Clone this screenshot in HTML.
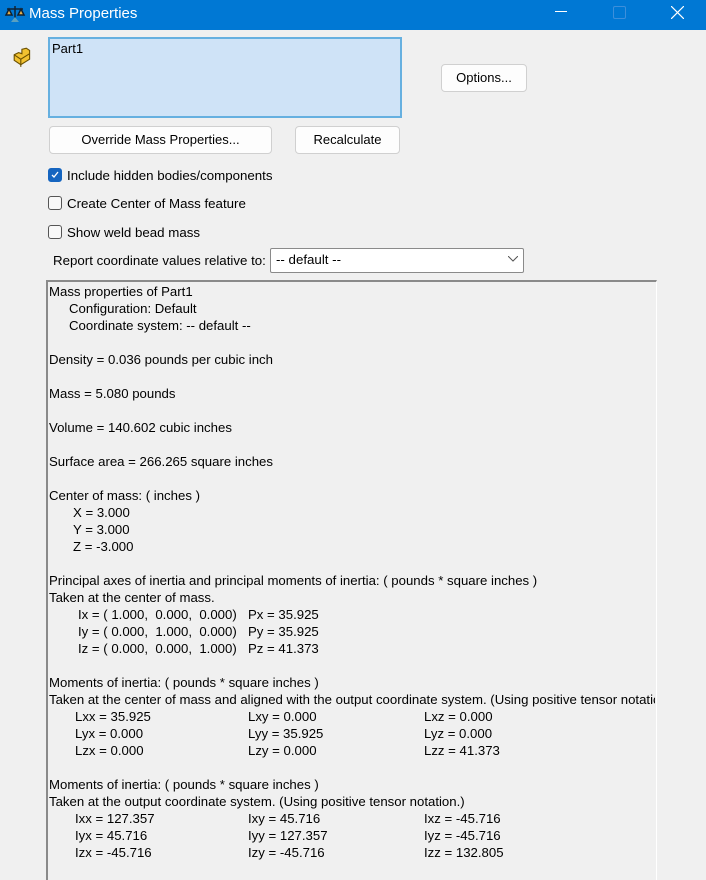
<!DOCTYPE html>
<html><head><style>
body{margin:0;width:706px;height:870px;background:#f0f0f0;font-family:"Liberation Sans",sans-serif;font-size:13px;color:#000;position:relative;overflow:hidden}
.a{position:absolute;white-space:nowrap}
.btn{position:absolute;background:#fdfdfd;border:1px solid #d0d0d0;border-radius:4px;text-align:center;box-sizing:border-box;font-size:13px}
.cb{position:absolute;width:14px;height:14px;border:1px solid #555;border-radius:3px;background:#f8f8f8;box-sizing:border-box}
#ta{position:absolute;left:46px;top:280px;width:611px;height:600px;border-left:2px solid #8a8a8a;border-top:2px solid #8a8a8a;border-right:1px solid #fff;box-sizing:border-box;overflow:hidden}
.t{font-size:13.2px}
</style></head><body>
<div class="a" style="left:0;top:0;width:706px;height:30px;background:#0078d4"></div>
<svg class="a" style="left:4px;top:4px" width="22" height="20" viewBox="0 0 22 20"><path d="M11 2v14M3 5h16M5 5l-3 6h6zM17 5l-3 6h6z" stroke="#123" stroke-width="1.5" fill="#e8b04a"/><path d="M7 18h8l-4-5z" fill="#5aa0c0"/></svg>
<div class="a" style="left:29px;top:5px;color:#fff;font-size:15px">Mass Properties</div>
<div class="a" style="left:555px;top:11px;width:12px;height:1px;background:#fff"></div>
<div class="a" style="left:613px;top:6px;width:11px;height:11px;border:1px solid #3d8fdb;border-radius:2px"></div>
<svg class="a" style="left:671px;top:6px" width="13" height="13"><path d="M0 0L13 13M13 0L0 13" stroke="#fff" stroke-width="1.2"/></svg>
<svg class="a" style="left:12px;top:46px" width="22" height="22" viewBox="0 0 20 20"><path d="M2 8l4-2 3 1v-4l4-1 3 2v8l-8 5-6-4z" fill="#f2c230" stroke="#6b5000"/><path d="M2 8l6 4 8-5M8 12v7" stroke="#6b5000" fill="none"/></svg>
<div class="a" style="left:48px;top:37px;width:354px;height:81px;background:#cfe3f7;border:2px solid #66b0e0;box-sizing:border-box"></div>
<div class="a" style="left:52px;top:41px">Part1</div>
<div class="btn" style="left:441px;top:64px;width:86px;height:28px;line-height:26px">Options...</div>
<div class="btn" style="left:49px;top:126px;width:223px;height:28px;line-height:26px">Override Mass Properties...</div>
<div class="btn" style="left:295px;top:126px;width:105px;height:28px;line-height:26px">Recalculate</div>
<div class="cb" style="left:48px;top:168px;background:#1565c0;border-color:#1565c0"><svg width="12" height="12" style="position:absolute;left:0;top:0"><path d="M3 6l2 2 4-5" stroke="#fff" stroke-width="1.3" fill="none"/></svg></div>
<div class="a" style="left:67px;top:168px;font-size:13.3px">Include hidden bodies/components</div>
<div class="cb" style="left:48px;top:196px"></div>
<div class="a" style="left:67px;top:196px;font-size:13.3px">Create Center of Mass feature</div>
<div class="cb" style="left:48px;top:225px"></div>
<div class="a" style="left:67px;top:225px;font-size:13.3px">Show weld bead mass</div>
<div class="a" style="left:53px;top:253px;font-size:13.3px">Report coordinate values relative to:</div>
<div class="a" style="left:270px;top:248px;width:254px;height:25px;background:#fff;border:1px solid #8a8a8a;box-sizing:border-box;border-radius:2px"></div>
<div class="a" style="left:276px;top:252px;font-size:13.3px">-- default --</div>
<svg class="a" style="left:508px;top:256px" width="10" height="6"><path d="M0 0L5 5L10 0" stroke="#555" fill="none"/></svg>
<div id="ta"></div>
<div class="t">
<div class="a" style="left:49px;top:284px">Mass properties of Part1</div>
<div class="a" style="left:69px;top:301px">Configuration: Default</div>
<div class="a" style="left:69px;top:318px">Coordinate system: -- default --</div>
<div class="a" style="left:49px;top:352px">Density = 0.036 pounds per cubic inch</div>
<div class="a" style="left:49px;top:386px">Mass = 5.080 pounds</div>
<div class="a" style="left:49px;top:420px">Volume = 140.602 cubic inches</div>
<div class="a" style="left:49px;top:454px">Surface area = 266.265 square inches</div>
<div class="a" style="left:49px;top:488px">Center of mass: ( inches )</div>
<div class="a" style="left:73px;top:505px">X = 3.000</div>
<div class="a" style="left:73px;top:522px">Y = 3.000</div>
<div class="a" style="left:73px;top:539px">Z = -3.000</div>
<div class="a" style="left:49px;top:573px">Principal axes of inertia and principal moments of inertia: ( pounds * square inches )</div>
<div class="a" style="left:49px;top:590px">Taken at the center of mass.</div>
<div class="a" style="left:78px;top:607px">Ix = ( 1.000,&nbsp; 0.000,&nbsp; 0.000)</div><div class="a" style="left:248px;top:607px">Px = 35.925</div>
<div class="a" style="left:78px;top:624px">Iy = ( 0.000,&nbsp; 1.000,&nbsp; 0.000)</div><div class="a" style="left:248px;top:624px">Py = 35.925</div>
<div class="a" style="left:78px;top:641px">Iz = ( 0.000,&nbsp; 0.000,&nbsp; 1.000)</div><div class="a" style="left:248px;top:641px">Pz = 41.373</div>
<div class="a" style="left:49px;top:675px">Moments of inertia: ( pounds * square inches )</div>
<div class="a" style="left:49px;top:692px;width:606px;overflow:hidden">Taken at the center of mass and aligned with the output coordinate system. (Using positive tensor notation.)</div>
<div class="a" style="left:75px;top:709px">Lxx = 35.925</div><div class="a" style="left:248px;top:709px">Lxy = 0.000</div><div class="a" style="left:424px;top:709px">Lxz = 0.000</div>
<div class="a" style="left:75px;top:726px">Lyx = 0.000</div><div class="a" style="left:248px;top:726px">Lyy = 35.925</div><div class="a" style="left:424px;top:726px">Lyz = 0.000</div>
<div class="a" style="left:75px;top:743px">Lzx = 0.000</div><div class="a" style="left:248px;top:743px">Lzy = 0.000</div><div class="a" style="left:424px;top:743px">Lzz = 41.373</div>
<div class="a" style="left:49px;top:777px">Moments of inertia: ( pounds * square inches )</div>
<div class="a" style="left:49px;top:794px">Taken at the output coordinate system. (Using positive tensor notation.)</div>
<div class="a" style="left:75px;top:811px">Ixx = 127.357</div><div class="a" style="left:248px;top:811px">Ixy = 45.716</div><div class="a" style="left:424px;top:811px">Ixz = -45.716</div>
<div class="a" style="left:75px;top:828px">Iyx = 45.716</div><div class="a" style="left:248px;top:828px">Iyy = 127.357</div><div class="a" style="left:424px;top:828px">Iyz = -45.716</div>
<div class="a" style="left:75px;top:845px">Izx = -45.716</div><div class="a" style="left:248px;top:845px">Izy = -45.716</div><div class="a" style="left:424px;top:845px">Izz = 132.805</div>
</div>
</body></html>
